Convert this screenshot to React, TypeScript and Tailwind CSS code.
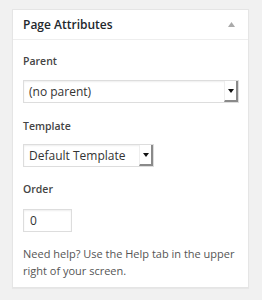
const font = { fontFamily: '"Open Sans", "Noto Sans", sans-serif' };

function FakeSelect({ value, width }: { value: string; width: string }) {
  return (
    <div
      className={`flex h-[23px] ${width} items-stretch border border-[#ddd] bg-white shadow-[inset_0_1px_2px_rgba(0,0,0,0.07)]`}
    >
      <span className="flex-1 truncate pl-[5px] text-[12px] leading-[21px] text-[#333]">
        {value}
      </span>
      <span className="flex w-[14px] items-center justify-center border-l border-[#eee] border-r-2 border-b-2 border-r-[#8a8a8a] border-b-[#8a8a8a] bg-white">
        <svg width="6" height="4" viewBox="0 0 6 4">
          <path d="M0 0h6L3 4z" fill="#111" />
        </svg>
      </span>
    </div>
  );
}

export default function App() {
  return (
    <div className="min-h-[300px] bg-[#f1f1f1] px-3 pt-[9px]" style={font}>
      <div className="w-[237px] border border-[#e5e5e5] bg-white shadow-[0_1px_1px_rgba(0,0,0,0.04)]">
        <div className="flex h-[30px] items-center justify-between border-b border-[#eee] pl-[10px] pr-[13px]">
          <h2 className="text-[12px] font-semibold text-[#23282d]">Page Attributes</h2>
          <svg width="7" height="5" viewBox="0 0 7 5">
            <path d="M0 5L3.5 0L7 5z" fill="#aaa" />
          </svg>
        </div>
        <div className="px-[10px] pb-[8px] pt-[13px] text-[#444]">
          <p className="mb-[11px] text-[10.5px] font-semibold leading-[16px]">Parent</p>
          <FakeSelect value="(no parent)" width="w-[216px]" />
          <p className="mb-[10px] mt-[15px] text-[10.5px] font-semibold leading-[16px]">Template</p>
          <FakeSelect value="Default Template" width="w-[131px]" />
          <p className="mb-[12px] mt-[14px] text-[10.5px] font-semibold leading-[16px]">Order</p>
          <div className="flex h-[23px] w-[49px] items-center border border-[#ddd] bg-white pl-[6px] text-[12px] text-[#333] shadow-[inset_0_1px_2px_rgba(0,0,0,0.07)]">
            0
          </div>
          <p className="mt-[13px] text-[11px] leading-[17px] text-[#555]">
            Need help? Use the Help tab in the upper right of your screen.
          </p>
        </div>
      </div>
    </div>
  );
}
